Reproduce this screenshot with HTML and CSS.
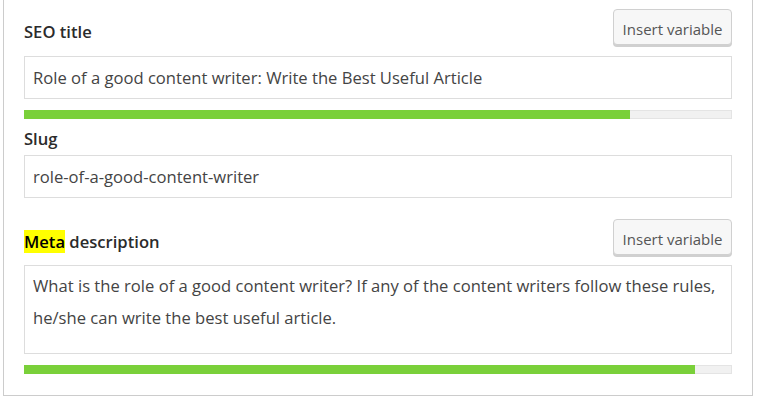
FILE: index.html
```html
<!DOCTYPE html>
<html>
<head>
<meta charset="utf-8">
<link rel="stylesheet" href="styles.css">
</head>
<body>
<div class="panel">
  <div class="field-head first">
    <span class="label">SEO title</span>
    <button class="btn">Insert variable</button>
  </div>
  <div class="input">Role of a good content writer: Write the Best Useful Article</div>
  <div class="progress"><div class="fill" style="width:85.6%"></div></div>

  <div class="field-head slug-head">
    <span class="label">Slug</span>
  </div>
  <div class="input">role-of-a-good-content-writer</div>

  <div class="field-head meta-head">
    <span class="label"><mark class="hl">Meta</mark> description</span>
    <button class="btn">Insert variable</button>
  </div>
  <div class="input textarea">What is the role of a good content writer? If any of the content writers follow these rules, he/she can write the best useful article.</div>
  <div class="progress last"><div class="fill" style="width:94.8%"></div></div>
</div>
</body>
</html>
```
FILE: styles.css
```css
html, body {
  margin: 0;
  padding: 0;
  background: #fff;
}
body {
  font-family: "Open Sans", "Noto Sans", sans-serif;
  color: #1e1e1e;
}
.panel {
  margin-left: 3px;
  width: 708px;
  padding: 0 20px;
  border: 1px solid #ccc;
  border-top: none;
  display: flex;
  flex-direction: column;
}
.field-head {
  display: flex;
  align-items: flex-start;
  justify-content: space-between;
}
.field-head.first {
  height: 38px;
  margin-top: 9px;
  margin-bottom: 9px;
}
.label {
  font-size: 16.6px;
  font-weight: 600;
  color: #2b2b2b;
  line-height: 22px;
  margin-top: 12px;
}
.btn {
  font-family: inherit;
  font-size: 15px;
  color: #555;
  background: #f7f7f7;
  border: 1px solid #d0d0d0;
  border-radius: 4px;
  box-shadow: 0 2px 0 #d0d0d0;
  height: 36px;
  width: 119px;
  padding: 3px 0 0;
  margin: 0;
  white-space: nowrap;
}
.input {
  box-sizing: border-box;
  border: 1px solid #ddd;
  height: 43px;
  padding: 0 8px;
  display: flex;
  align-items: center;
  font-size: 16.6px;
  color: #444;
}
.textarea {
  display: block;
  height: 89px;
  padding: 4px 8px;
  line-height: 32px;
}
.progress {
  margin-top: 11px;
  height: 9px;
  background: #f1f1f1;
  box-shadow: inset 0 0 0 1px #e4e4e4;
}
.fill {
  height: 100%;
  background: #7ad03a;
}
.slug-head {
  margin-top: 0;
  margin-bottom: 5px;
}
.slug-head .label {
  margin-top: 9px;
}
.meta-head {
  height: 38px;
  margin-top: 21px;
  margin-bottom: 8px;
}
.hl {
  background: #ffff00;
  color: #000;
  padding: 0;
}
.progress.last {
  margin-bottom: 21px;
}
```
